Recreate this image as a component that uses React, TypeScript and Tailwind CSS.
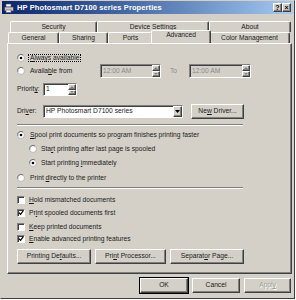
import type { ReactNode } from 'react';

const raised =
  'border border-t-white border-l-white border-r-[#404040] border-b-[#404040] shadow-[inset_-1px_-1px_0_#808080]';
const sunken =
  'border border-t-[#808080] border-l-[#808080] border-r-white border-b-white shadow-[inset_1px_1px_0_#404040]';

function Radio({ checked }: { checked?: boolean }) {
  return (
    <svg width="8" height="8" viewBox="0 0 12 12" className="shrink-0">
      <circle cx="6" cy="6" r="5.2" fill="#fff" stroke="#a0a0a0" strokeWidth="1" />
      <path d="M1.2 7A5 5 0 0 1 9 1.6" fill="none" stroke="#606060" strokeWidth="1.2" />
      {checked && <circle cx="6" cy="6" r="2" fill="#000" />}
    </svg>
  );
}

function Check({ checked }: { checked?: boolean }) {
  return (
    <span className={`w-[8px] h-[8px] bg-white shrink-0 flex items-center justify-center ${sunken}`}>
      {checked && (
        <svg width="6" height="6" viewBox="0 0 7 7">
          <path d="M1 3l2 2 3-4" fill="none" stroke="#000" strokeWidth="1.4" />
        </svg>
      )}
    </span>
  );
}

function Btn({ children, w, def, disabled }: { children: ReactNode; w: string; def?: boolean; disabled?: boolean }) {
  return (
    <div
      className={`${w} h-[15px] flex items-center justify-center bg-[#d4d0c8] ${raised} ${
        def ? 'outline outline-1 outline-black' : ''
      } ${disabled ? 'text-[#a09c94]' : ''}`}
    >
      {children}
    </div>
  );
}

function Spin() {
  return (
    <div className="w-[8px] h-full flex flex-col">
      <div className={`flex-1 bg-[#d4d0c8] ${raised} flex items-center justify-center`}>
        <svg width="4" height="2" viewBox="0 0 4 2"><path d="M2 0L4 2H0z" fill="#808080" /></svg>
      </div>
      <div className={`flex-1 bg-[#d4d0c8] ${raised} flex items-center justify-center`}>
        <svg width="4" height="2" viewBox="0 0 4 2"><path d="M0 0h4L2 2z" fill="#808080" /></svg>
      </div>
    </div>
  );
}

function Tab({ label, w, active }: { label: string; w: string; active?: boolean }) {
  return (
    <div
      className={`${w} flex items-center justify-center bg-[#d4d0c8] border-t border-l border-t-white border-l-white border-r border-r-[#404040] rounded-t-[2px] shadow-[inset_-1px_0_0_#808080] ${
        active ? 'h-[13px] -mt-[2px] relative z-10 -mx-[2px] pb-[3px]' : 'h-[11px]'
      }`}
    >
      {label}
    </div>
  );
}

const Sep = ({ mt }: { mt: string }) => (
  <div className={`${mt} w-[226px] h-[2px] border-t border-t-[#808080] border-b border-b-white`} />
);

export default function App() {
  return (
    <div className="w-[296px] h-[300px] bg-white">
      <div className="w-[295px] h-[299px] bg-[#d4d0c8] border border-t-[#d4d0c8] border-l-[#d4d0c8] border-r-[#404040] border-b-[#404040] font-['Liberation_Sans',Arial,sans-serif] text-[6.7px] text-[#1a1a1a] leading-none">
        {/* Title bar */}
        <div className="mx-[1px] h-[13px] flex items-center bg-gradient-to-r from-[#0a246a] to-[#a6caf0] pl-[2px] pr-[2px]">
          <svg width="10" height="10" viewBox="0 0 10 10" className="shrink-0">
            <rect x="2" y="1" width="5" height="3" fill="#fff" stroke="#555" strokeWidth="0.6" />
            <rect x="0.5" y="4" width="9" height="4" fill="#c8c8c8" stroke="#333" strokeWidth="0.6" />
            <rect x="2" y="7" width="5" height="2.5" fill="#fff" stroke="#555" strokeWidth="0.6" />
          </svg>
          <span className="ml-[3px] text-white font-bold text-[7.5px] tracking-[0.1px]">HP Photosmart D7100 series Properties</span>
          <div className="ml-auto flex">
            <div className={`w-[9px] h-[9px] bg-[#d4d0c8] ${raised} flex items-center justify-center text-[7px] font-bold text-black`}>?</div>
            <div className={`w-[9px] h-[9px] bg-[#d4d0c8] ${raised} flex items-center justify-center text-[7px] font-bold text-black`}>×</div>
          </div>
        </div>

        {/* Tabs */}
        <div className="mt-[7px] pl-[9px] flex">
          <Tab label="Security" w="w-[87px]" />
          <Tab label="Device Settings" w="w-[112px]" />
          <Tab label="About" w="w-[82px]" />
        </div>
        <div className="pl-[7px] flex items-end">
          <Tab label="General" w="w-[51px]" />
          <Tab label="Sharing" w="w-[49px]" />
          <Tab label="Ports" w="w-[45px]" />
          <Tab label="Advanced" w="w-[60px]" active />
          <Tab label="Color Management" w="w-[81px]" />
        </div>

        {/* Panel */}
        <div className="ml-[6px] w-[285px] h-[231px] border border-t-white border-l-white border-r-[#404040] border-b-[#404040] shadow-[inset_-1px_-1px_0_#808080] pl-[9px] flex flex-col">
          <div className="mt-[9px] h-[10px] flex items-center gap-[4px]">
            <Radio checked />
            <span className="outline outline-1 outline-dotted outline-black px-[1px]">
              <u>A</u>lways available
            </span>
          </div>
          <div className="mt-[1px] h-[14px] flex items-center">
            <Radio />
            <span className="ml-[5px] w-[70px]">
              Availa<u>b</u>le from
            </span>
            <div className={`w-[61px] h-full flex items-center ${sunken} bg-[#d4d0c8] text-[#8a8a8a] pl-[2px]`}>
              <span className="flex-1">12:00 AM</span>
              <Spin />
            </div>
            <span className="ml-[9px] w-[19px] text-[#8a8a8a]">To</span>
            <div className={`w-[62px] h-full flex items-center ${sunken} bg-[#d4d0c8] text-[#8a8a8a] pl-[2px]`}>
              <span className="flex-1">12:00 AM</span>
              <Spin />
            </div>
          </div>
          <div className="mt-[5px] h-[13px] flex items-center">
            <span className="w-[26px]">
              Priorit<u>y</u>:
            </span>
            <div className={`w-[34px] h-full flex items-center ${sunken} bg-white pl-[2px]`}>
              <span className="flex-1">1</span>
              <Spin />
            </div>
          </div>
          <div className="mt-[8px] h-[15px] flex items-center">
            <span className="w-[26px]">
              Dri<u>v</u>er:
            </span>
            <div className={`w-[140px] h-[13px] flex items-center ${sunken} bg-white pl-[2px]`}>
              <span className="flex-1">HP Photosmart D7100 series</span>
              <div className={`w-[9px] h-full bg-[#d4d0c8] ${raised} flex items-center justify-center`}>
                <svg width="5" height="3" viewBox="0 0 5 3"><path d="M0 0h5L2.5 3z" fill="#000" /></svg>
              </div>
            </div>
            <div className="ml-[8px]">
              <Btn w="w-[53px]">
                Ne<u>w</u>&nbsp;Driver...
              </Btn>
            </div>
          </div>
          <Sep mt="mt-[5px]" />
          <div className="mt-[4px] h-[10px] flex items-center gap-[5px]">
            <Radio checked />
            <span>
              <u>S</u>pool print documents so program finishes printing faster
            </span>
          </div>
          <div className="mt-[4px] h-[10px] flex items-center gap-[4px] pl-[12px]">
            <Radio />
            <span>
              Sta<u>r</u>t printing after last page is spooled
            </span>
          </div>
          <div className="mt-[4px] h-[10px] flex items-center gap-[4px] pl-[12px]">
            <Radio checked />
            <span>
              Start printing <u>i</u>mmediately
            </span>
          </div>
          <div className="mt-[5px] h-[10px] flex items-center gap-[5px]">
            <Radio />
            <span>
              Print <u>d</u>irectly to the printer
            </span>
          </div>
          <Sep mt="mt-[4px]" />
          {[
            { pre: '', k: 'H', post: 'old mismatched documents', c: false, mt: 'mt-[6px]' },
            { pre: 'Pr', k: 'i', post: 'nt spooled documents first', c: true, mt: 'mt-[3px]' },
            { pre: '', k: 'K', post: 'eep printed documents', c: false, mt: 'mt-[4px]' },
            { pre: '', k: 'E', post: 'nable advanced printing features', c: true, mt: 'mt-[2px]' },
          ].map(r => (
            <div key={r.post} className={`${r.mt} h-[10px] flex items-center gap-[4px]`}>
              <Check checked={r.c} />
              <span>
                {r.pre}
                <u>{r.k}</u>
                {r.post}
              </span>
            </div>
          ))}
          <div className="mt-[5px] flex gap-[4px]">
            <Btn w="w-[74px]">
              Printing De<u>f</u>aults...
            </Btn>
            <Btn w="w-[71px]">
              Pri<u>n</u>t Processor...
            </Btn>
            <Btn w="w-[74px]">
              Separat<u>o</u>r Page...
            </Btn>
          </div>
        </div>

        {/* Dialog buttons */}
        <div className="mt-[4px] pr-[3px] flex justify-end gap-[4px]">
          <Btn w="w-[48px]" def>
            OK
          </Btn>
          <Btn w="w-[48px]">Cancel</Btn>
          <Btn w="w-[47px]" disabled>
            <span className="[text-shadow:1px_1px_0_#fff]">
              Appl<u>y</u>
            </span>
          </Btn>
        </div>
      </div>
    </div>
  );
}
